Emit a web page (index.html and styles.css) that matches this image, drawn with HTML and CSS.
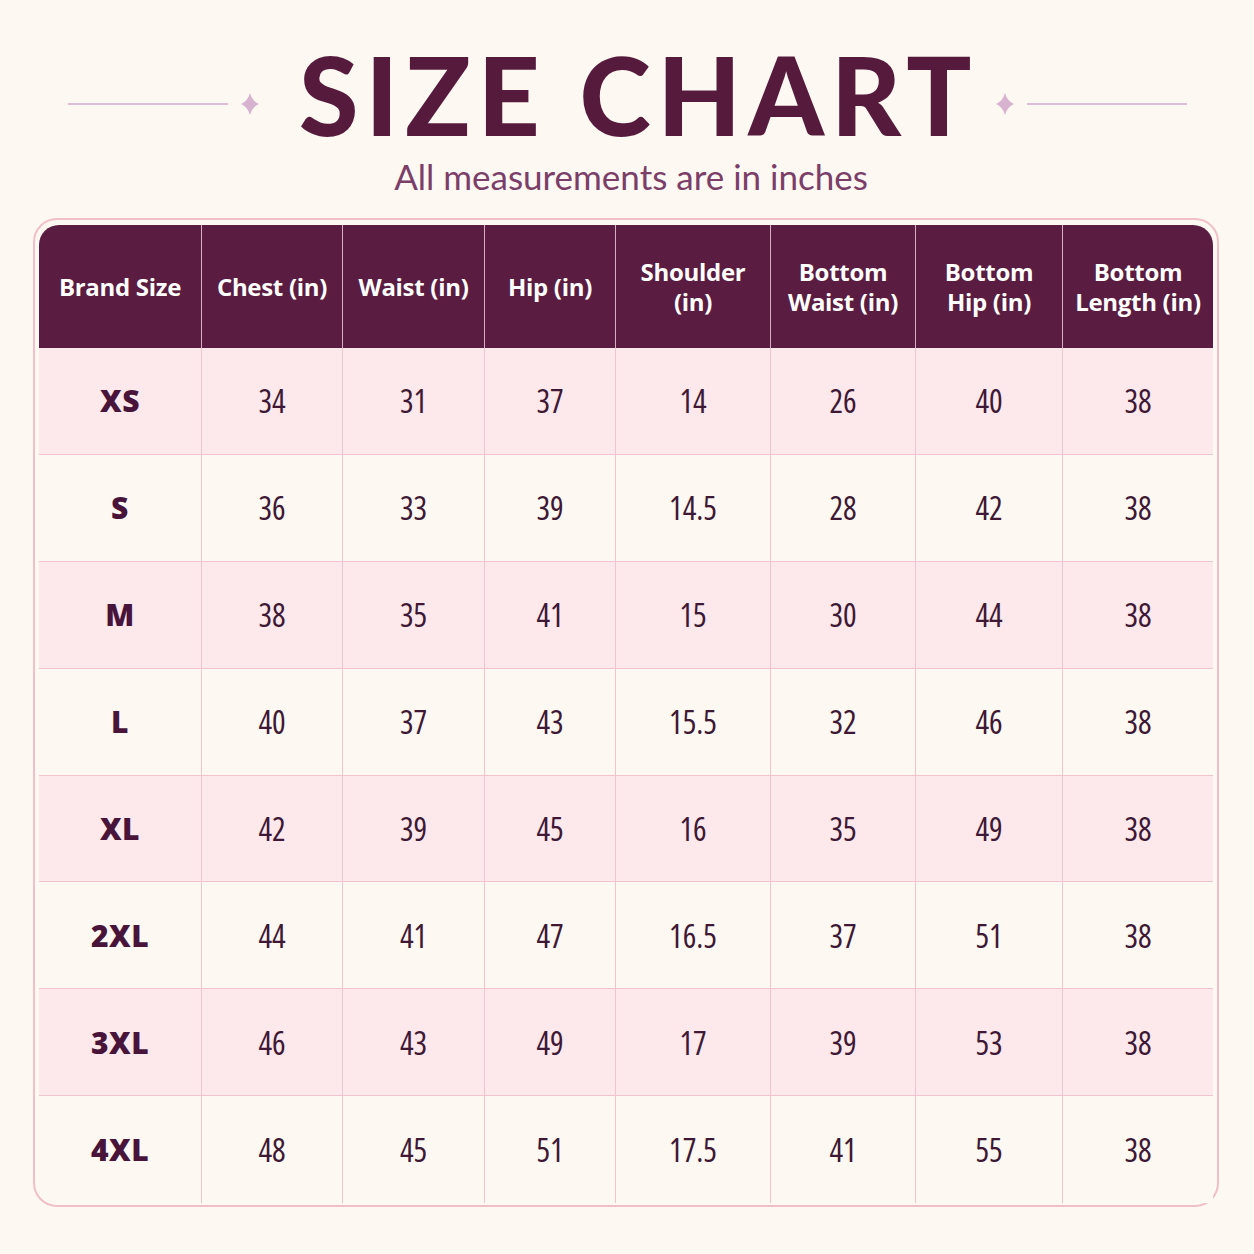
FILE: index.html
```html
<!DOCTYPE html>
<html>
<head>
<meta charset="utf-8">
<link rel="stylesheet" href="styles.css">
</head>
<body>
<div class="page">
  <header class="head">
    <div class="deco left">
      <span class="rule"></span>
      <svg class="spark" viewBox="0 0 18 22"><path d="M9 0 Q11.3 8.2 18 11 Q11.3 13.8 9 22 Q6.7 13.8 0 11 Q6.7 8.2 9 0 Z"/></svg>
    </div>
    <h1 class="title">SIZE CHART</h1>
    <div class="deco right">
      <svg class="spark" viewBox="0 0 18 22"><path d="M9 0 Q11.3 8.2 18 11 Q11.3 13.8 9 22 Q6.7 13.8 0 11 Q6.7 8.2 9 0 Z"/></svg>
      <span class="rule"></span>
    </div>
  </header>
  <p class="sub">All measurements are in inches</p>
  <div class="card">
    <div class="grid">
      <div class="th">Brand Size</div>
      <div class="th">Chest (in)</div>
      <div class="th">Waist (in)</div>
      <div class="th">Hip (in)</div>
      <div class="th"><span>Shoulder</span><span>(in)</span></div>
      <div class="th"><span>Bottom</span><span>Waist (in)</span></div>
      <div class="th"><span>Bottom</span><span>Hip (in)</span></div>
      <div class="th"><span>Bottom</span><span>Length (in)</span></div>

      <div class="td sz pink">XS</div><div class="td pink">34</div><div class="td pink">31</div><div class="td pink">37</div><div class="td pink">14</div><div class="td pink">26</div><div class="td pink">40</div><div class="td pink">38</div>
      <div class="td sz">S</div><div class="td">36</div><div class="td">33</div><div class="td">39</div><div class="td">14.5</div><div class="td">28</div><div class="td">42</div><div class="td">38</div>
      <div class="td sz pink">M</div><div class="td pink">38</div><div class="td pink">35</div><div class="td pink">41</div><div class="td pink">15</div><div class="td pink">30</div><div class="td pink">44</div><div class="td pink">38</div>
      <div class="td sz">L</div><div class="td">40</div><div class="td">37</div><div class="td">43</div><div class="td">15.5</div><div class="td">32</div><div class="td">46</div><div class="td">38</div>
      <div class="td sz pink">XL</div><div class="td pink">42</div><div class="td pink">39</div><div class="td pink">45</div><div class="td pink">16</div><div class="td pink">35</div><div class="td pink">49</div><div class="td pink">38</div>
      <div class="td sz">2XL</div><div class="td">44</div><div class="td">41</div><div class="td">47</div><div class="td">16.5</div><div class="td">37</div><div class="td">51</div><div class="td">38</div>
      <div class="td sz pink">3XL</div><div class="td pink">46</div><div class="td pink">43</div><div class="td pink">49</div><div class="td pink">17</div><div class="td pink">39</div><div class="td pink">53</div><div class="td pink">38</div>
      <div class="td sz last">4XL</div><div class="td last">48</div><div class="td last">45</div><div class="td last">51</div><div class="td last">17.5</div><div class="td last">41</div><div class="td last">55</div><div class="td last">38</div>
    </div>
  </div>
</div>
</body>
</html>
```

FILE: styles.css
```css
html, body {
  margin: 0;
  padding: 0;
  background: #fdf8f2;
}
.page {
  width: 1254px;
  height: 1254px;
  box-sizing: border-box;
  padding-top: 38px;
}
.head {
  display: flex;
  justify-content: flex-start;
  align-items: center;
  height: 112px;
  padding-left: 68px;
}
.deco {
  display: flex;
  align-items: center;
  gap: 13px;
  padding-top: 20px;
}
.rule {
  display: block;
  width: 160px;
  height: 2px;
  background: #e0bcd6;
}
.spark {
  width: 18px;
  height: 22px;
  fill: #d7b3d0;
}
.deco.left { padding-right: 40px; }
.deco.right { padding-left: 17px; }
.title {
  margin: 0;
  font-family: "Lato", "DejaVu Sans", sans-serif;
  font-weight: 900;
  font-size: 108px;
  line-height: 112px;
  letter-spacing: 7px;
  color: #561a3d;
  white-space: nowrap;
}
.sub {
  margin: 4px 0 0 0;
  padding-left: 8px;
  text-align: center;
  font-family: "Lato", sans-serif;
  font-weight: 400;
  font-size: 35px;
  line-height: 44px;
  color: #7b3e68;
}
.card {
  margin: 20px 0 0 33px;
  width: 1186px;
  box-sizing: border-box;
  border: 2px solid #f0bfc9;
  border-radius: 24px;
  padding: 5px 4px 2px 4px;
}
.grid {
  display: grid;
  grid-template-columns: 163px 141px 142px 131px 155px 145px 147px 150px;
  grid-template-rows: 123px repeat(8, 106.9px);
  font-family: "Open Sans", sans-serif;
}
.th {
  background: #5a1c40;
  color: #ffffff;
  font-weight: 700;
  font-size: 24px;
  line-height: 30px;
  letter-spacing: -0.3px;
  display: flex;
  flex-direction: column;
  align-items: center;
  justify-content: center;
  text-align: center;
  border-right: 1px solid #d9aec0;
  white-space: nowrap;
}
.th:first-child { border-top-left-radius: 20px; }
.th:nth-child(8) { border-top-right-radius: 20px; border-right: none; }
.td {
  display: flex;
  align-items: center;
  justify-content: center;
  font-stretch: 85%;
  font-size: 32px;
  font-weight: 500;
  color: #3e1834;
  border-right: 1px solid #f2c4cf;
  border-bottom: 1px solid #f2c4cf;
  background: #fdf8f2;
}
.td:nth-child(8n) { border-right: none; }
.td.pink { background: #fde8ec; }
.td.last { border-bottom: none; }
.td.sz {
  font-stretch: 100%;
  font-weight: 800;
  font-size: 30px;
  color: #48143a;
  letter-spacing: 0.5px;
}
.td:nth-last-child(8) { border-bottom-left-radius: 18px; }
```
